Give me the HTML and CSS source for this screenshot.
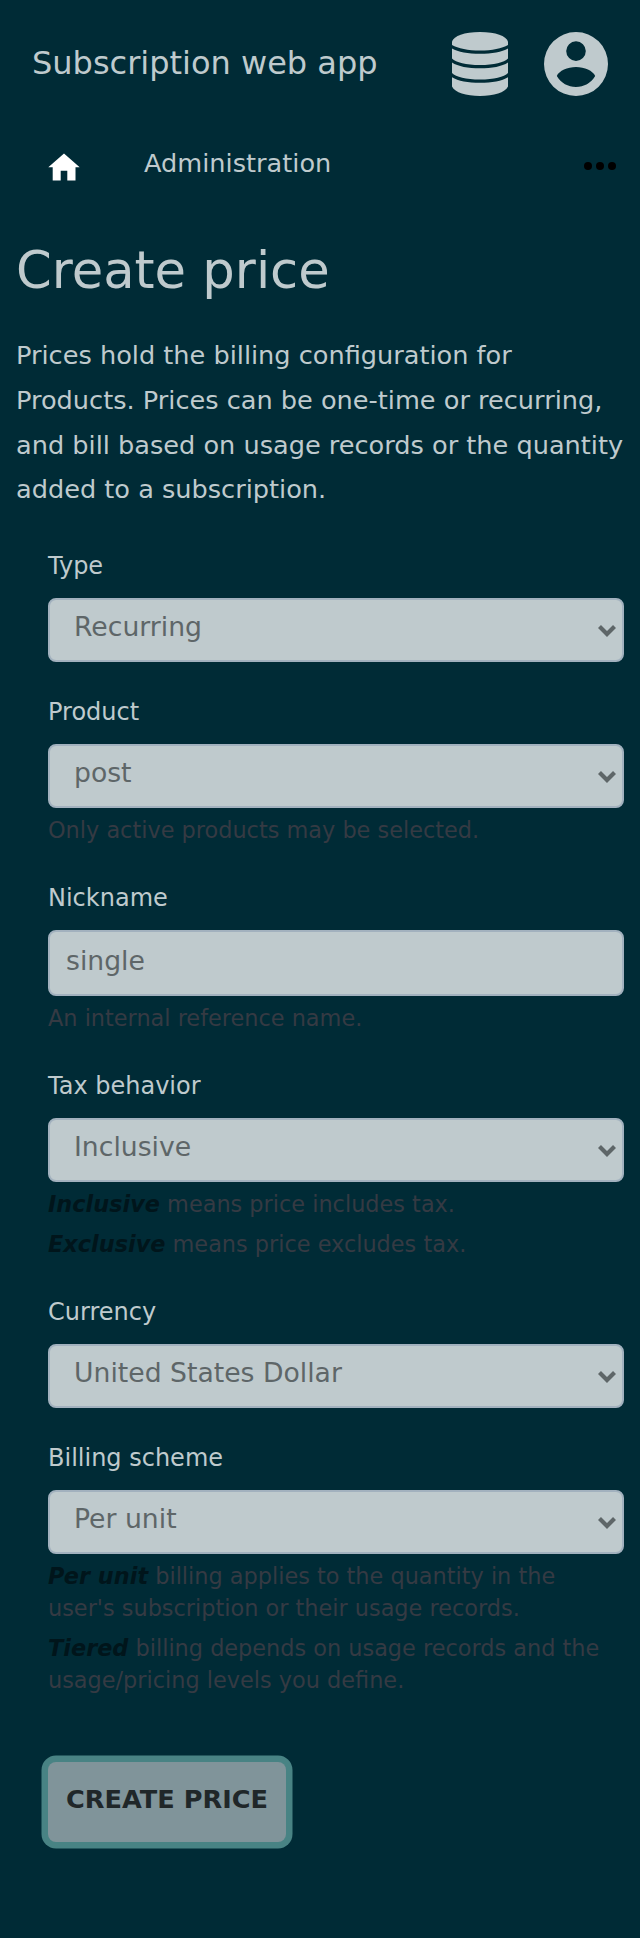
FILE: index.html
```html
<!DOCTYPE html>
<html lang="en">
<head>
<meta charset="utf-8">
<title>Create price</title>
<link rel="stylesheet" href="styles.css">
</head>
<body>
<header class="header">
  <div class="brand">Subscription web app</div>
  <div class="header-icons">
    <svg class="icon-db" viewBox="0 0 56 64" width="56" height="64" fill="currentColor">
      <path d="M0 9.500C2 4 12 0 28 0S54 4 56 9.500V13C50 16.500 40 18.500 28 18.500S6 16.500 0 13z"/>
      <path d="M0 16.500C6 20 16 21.800 28 21.800S50 20 56 16.500V26.500C52 30.500 42 33 28 33S4 30.500 0 26.500z"/>
      <path d="M0 30.500C6 34.500 16 36.300 28 36.300S50 34.500 56 30.500V41C52 45 42 47.500 28 47.500S4 45 0 41z"/>
      <path d="M0 45.200C6 49 16 50.800 28 50.800S50 49 56 45.200V54.500C53 60.500 42 64 28 64S3 60.500 0 54.500z"/>
    </svg>
    <svg class="icon-user" viewBox="0 0 64 64" width="64" height="64" fill="currentColor">
      <path fill-rule="evenodd" d="M32 0a32 32 0 1 0 0 64a32 32 0 0 0 0-64zM32 9.300a9.800 9.800 0 1 1 0 19.600a9.800 9.800 0 0 1 0-19.600zM32 35c8.500 0 17 3.800 19.200 9C47 51 40 55 32 55S17 51 12.800 44C15 38.800 23.500 35 32 35z"/>
    </svg>
  </div>
</header>
<nav class="nav">
  <svg class="icon-home" viewBox="0 0 32 28" width="32" height="28"><path fill="#fff" d="M16 .5L31.700 14.200H27.500V27.500H19.300V17.800H12.700V27.500H4.700V14.200H.3z"/></svg>
  <a class="nav-link">Administration</a>
  <svg class="icon-more" viewBox="0 0 32 8" width="32" height="8"><circle cx="4" cy="4" r="4"/><circle cx="16" cy="4" r="4"/><circle cx="28" cy="4" r="4"/></svg>
</nav>
<main class="content">
  <h1 class="heading">Create price</h1>
  <p class="intro">Prices hold the billing configuration for Products. Prices can be one-time or recurring, and bill based on usage records or the quantity added to a subscription.</p>
  <form class="form">
    <div class="field">
      <label class="label">Type</label>
      <div class="control select">Recurring<svg class="chevron" viewBox="0 0 18 12" width="18" height="12"><path d="M1.500 1.500L9 9L16.500 1.500"/></svg></div>
    </div>
    <div class="field">
      <label class="label">Product</label>
      <div class="control select">post<svg class="chevron" viewBox="0 0 18 12" width="18" height="12"><path d="M1.500 1.500L9 9L16.500 1.500"/></svg></div>
      <p class="hint">Only active products may be selected.</p>
    </div>
    <div class="field">
      <label class="label">Nickname</label>
      <div class="control input">single</div>
      <p class="hint">An internal reference name.</p>
    </div>
    <div class="field">
      <label class="label">Tax behavior</label>
      <div class="control select">Inclusive<svg class="chevron" viewBox="0 0 18 12" width="18" height="12"><path d="M1.500 1.500L9 9L16.500 1.500"/></svg></div>
      <p class="hint"><em class="term">Inclusive</em> means price includes tax.</p>
      <p class="hint"><em class="term">Exclusive</em> means price excludes tax.</p>
    </div>
    <div class="field">
      <label class="label">Currency</label>
      <div class="control select">United States Dollar<svg class="chevron" viewBox="0 0 18 12" width="18" height="12"><path d="M1.500 1.500L9 9L16.500 1.500"/></svg></div>
    </div>
    <div class="field">
      <label class="label">Billing scheme</label>
      <div class="control select">Per unit<svg class="chevron" viewBox="0 0 18 12" width="18" height="12"><path d="M1.500 1.500L9 9L16.500 1.500"/></svg></div>
      <p class="hint"><em class="term">Per unit</em> billing applies to the quantity in the user's subscription or their usage records.</p>
      <p class="hint"><em class="term">Tiered</em> billing depends on usage records and the usage/pricing levels you define.</p>
    </div>
    <button class="submit" type="button">Create price</button>
  </form>
</main>
</body>
</html>
```
FILE: styles.css
```css
* { box-sizing: border-box; }
html { background: #002b36; }
body {
  margin: 0;
  padding-bottom: 96px;
  color: #bfcacd;
  font-family: "DejaVu Sans", sans-serif;
  font-size: 25.6px;
}
.header {
  display: flex;
  justify-content: space-between;
  align-items: center;
  height: 128px;
  padding: 0 32px;
}
.brand { font-size: 32px; line-height: 38px; padding-bottom: 2px; }
.header-icons { display: flex; gap: 36px; }
.nav {
  display: flex;
  align-items: center;
  height: 76px;
  padding: 0 24px 0 48px;
}
.nav-link { margin-left: 64px; line-height: 36px; padding-bottom: 6px; }
.icon-home { margin-top: 1px; }
.icon-more { margin-left: auto; }
.content { padding: 0 16px; }
.heading {
  margin: 34px 0 0;
  font-size: 51.2px;
  font-weight: 400;
  line-height: 64px;
}
.intro { margin: 31px 0 0; line-height: 44.8px; }
.form {
  display: flex;
  flex-direction: column;
  align-items: stretch;
  gap: 34px;
  margin-top: 38px;
  padding-left: 32px;
}
.label {
  display: block;
  margin-bottom: 16px;
  font-size: 24px;
  line-height: 32px;
}
.control {
  display: flex;
  align-items: center;
  justify-content: space-between;
  border: 2px solid #a2b1be;
  border-radius: 8px;
  background: #bfcacd;
  color: #5e6668;
  font-size: 26.667px;
  line-height: 32px;
}
.select { height: 64px; padding: 0 6px 6px 24px; }
.input { height: 66px; padding: 0 16px 4px; }
.chevron { margin-top: 7px; fill: none; stroke: #5e6668; stroke-width: 4.200; }
.hint {
  margin: 6px 0 0;
  padding-bottom: 2px;
  color: #353a43;
  font-size: 22.4px;
  line-height: 32px;
}
.term { color: #00151b; font-weight: 700; }
.submit {
  align-self: flex-start;
  width: 238px;
  height: 80px;
  margin-top: 30px;
  padding: 0 0 7px;
  border: 0;
  border-radius: 8px;
  background: #80949a;
  box-shadow: 0 0 0 6.500px #488384;
  color: #202729;
  font: 700 25.6px "DejaVu Sans", sans-serif;
  text-transform: uppercase;
  white-space: nowrap;
}
```
